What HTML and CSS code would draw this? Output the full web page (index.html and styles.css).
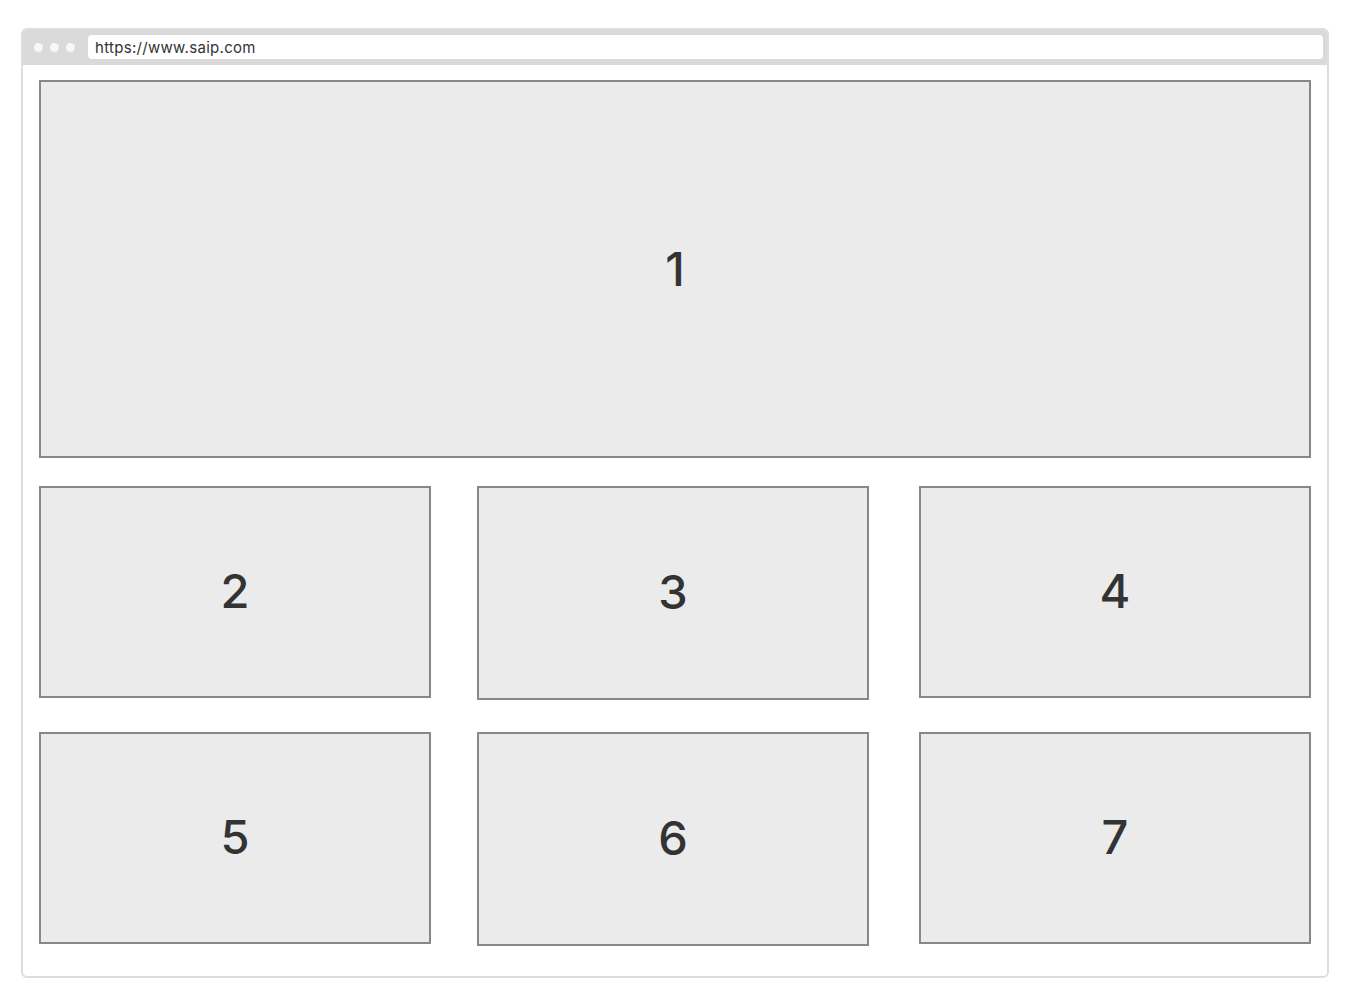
FILE: index.html
```html
<!DOCTYPE html>
<html>
<head>
<meta charset="utf-8">
<link rel="stylesheet" href="styles.css">
</head>
<body>
<div class="window">
  <div class="bar">
    <div class="dots"><span class="dot"></span><span class="dot"></span><span class="dot"></span></div>
    <div class="address">https://www.saip.com</div>
  </div>
  <div class="content">
    <div class="box hero">1</div>
    <div class="grid">
      <div class="box">2</div>
      <div class="box tall">3</div>
      <div class="box">4</div>
      <div class="box">5</div>
      <div class="box tall">6</div>
      <div class="box">7</div>
    </div>
  </div>
</div>
</body>
</html>
```
FILE: styles.css
```css
* { box-sizing: border-box; }
html, body { margin: 0; padding: 0; background: #ffffff; }
body { font-family: Inter, "Liberation Sans", Arial, sans-serif; color: #333333; }

.window {
  margin: 28px 0 0 21px;
  width: 1308px;
  height: 950px;
  border: 2px solid #dddddd;
  border-radius: 6px;
  overflow: hidden;
  background: #ffffff;
}

.bar {
  height: 35px;
  background: #dadada;
  display: flex;
  align-items: flex-start;
  padding: 5px 4px 0 0;
}

.dots {
  width: 65px;
  height: 24px;
  display: flex;
  align-items: center;
  gap: 7px;
  padding-left: 11px;
}
.dot {
  width: 9px;
  height: 9px;
  border-radius: 50%;
  background: #f7f7f7;
}

.address {
  flex: 1;
  height: 24px;
  background: #ffffff;
  border-radius: 4px;
  padding-left: 7px;
  font-size: 15px;
  line-height: 25px;
  letter-spacing: 0.3px;
  color: #333333;
}

.content {
  padding: 15px 16px 0 16px;
}

.box {
  background: #ebebeb;
  border: 2px solid #888888;
  display: flex;
  align-items: center;
  justify-content: center;
  padding-bottom: 3px;
  font-size: 47px;
  font-weight: 500;
  color: #333333;
  height: 212px;
}
.hero { height: 378px; padding-bottom: 2px; }
.tall { height: 214px; }

.grid {
  margin-top: 28px;
  display: grid;
  grid-template-columns: 392px 392px 388px;
  column-gap: 46px;
  grid-template-rows: 214px 214px;
  row-gap: 32px;
  align-items: start;
}
.grid .box { width: 392px; }
.grid .box:nth-child(3n) { margin-left: 4px; }
```
